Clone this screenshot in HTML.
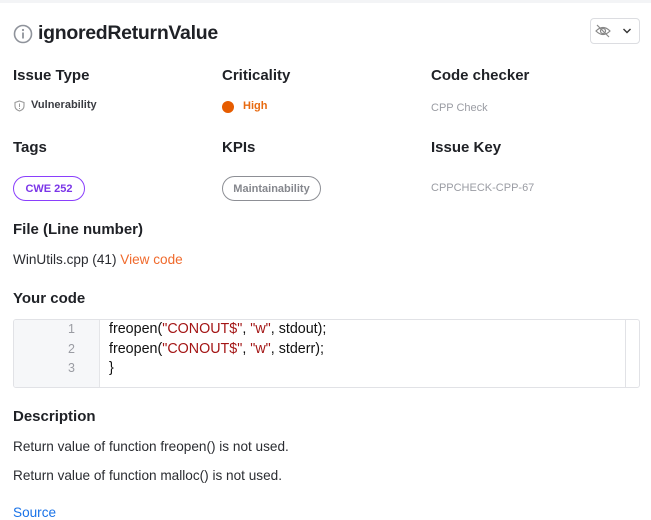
<!DOCTYPE html>
<html><head><meta charset="utf-8"><style>
*{margin:0;padding:0;box-sizing:border-box}
body{width:651px;height:517px;overflow:hidden;background:#fff;font-family:"Liberation Sans",sans-serif;color:#1f2126;position:relative}
.a{position:absolute;white-space:nowrap}
.h{font-size:15px;font-weight:bold;color:#1f2126}
.g{font-size:11px;color:#9a9ca3}
.t{font-size:13.6px;color:#2a2c31}
.pill{position:absolute;height:25px;border-radius:13px;font-size:11px;font-weight:bold;display:flex;align-items:center;justify-content:center}
</style></head><body>
<div class="a" style="left:0;top:0;width:651px;height:3px;background:#f3f4f6"></div>
<svg class="a" style="left:13px;top:24px" width="20" height="20" viewBox="0 0 20 20"><circle cx="10" cy="10" r="8.5" fill="none" stroke="#8f939b" stroke-width="1.6"/><rect x="9.1" y="8.5" width="1.8" height="6" fill="#8f939b"/><circle cx="10" cy="6" r="1.1" fill="#8f939b"/></svg>
<div class="a" style="left:38px;top:22px;font-size:19.5px;font-weight:bold;color:#1f2126;letter-spacing:-0.3px">ignoredReturnValue</div>
<div class="a" style="left:590px;top:18px;width:50px;height:26px;border:1px solid #dcdde1;border-radius:4px"></div>
<svg class="a" style="left:594px;top:23px" width="18" height="16" viewBox="0 0 18 16"><path d="M2 8 Q9 1 16 8 Q9 15 2 8Z" fill="none" stroke="#888" stroke-width="1.2"/><circle cx="9" cy="8" r="2.5" fill="none" stroke="#888" stroke-width="1.2"/><path d="M3 2 L15 14" stroke="#888" stroke-width="1.2"/></svg>
<svg class="a" style="left:622px;top:27px" width="10" height="8" viewBox="0 0 10 8"><path d="M1.5 2 L5 5.5 L8.5 2" fill="none" stroke="#333" stroke-width="1.4"/></svg>

<div class="a h" style="left:13px;top:67px">Issue Type</div>
<div class="a h" style="left:222px;top:67px">Criticality</div>
<div class="a h" style="left:431px;top:67px">Code checker</div>
<svg class="a" style="left:14px;top:100px" width="11" height="12" viewBox="0 0 11 12"><path d="M5.5 1 L10 2.5 V6 Q10 9.5 5.5 11 Q1 9.5 1 6 V2.5Z" fill="none" stroke="#999" stroke-width="1.1"/><rect x="5" y="3.5" width="1" height="3.5" fill="#999"/><rect x="5" y="8" width="1" height="1" fill="#999"/></svg>
<div class="a" style="left:31px;top:99px;font-size:11px;font-weight:bold;color:#3a3c42">Vulnerability</div>
<div class="a" style="left:222px;top:101px;width:12px;height:12px;border-radius:50%;background:#e65c00"></div>
<div class="a" style="left:243px;top:100px;font-size:11px;font-weight:bold;color:#e86a10">High</div>
<div class="a g" style="left:431px;top:102px">CPP Check</div>

<div class="a h" style="left:13px;top:139px">Tags</div>
<div class="a h" style="left:222px;top:139px">KPIs</div>
<div class="a h" style="left:431px;top:139px">Issue Key</div>
<div class="pill" style="left:13px;top:176px;width:72px;border:1px solid #8a3ffc;color:#7b36e8">CWE 252</div>
<div class="pill" style="left:222px;top:176px;width:99px;border:1px solid #8d8f95;color:#85878d">Maintainability</div>
<div class="a g" style="left:431px;top:182px">CPPCHECK-CPP-67</div>

<div class="a h" style="left:13px;top:221px">File (Line number)</div>
<div class="a t" style="left:13px;top:252px">WinUtils.cpp (41) <span style="color:#f06a2c">View code</span></div>

<div class="a h" style="left:13px;top:290px">Your code</div>
<div class="a" style="left:13px;top:319px;width:627px;height:69px;border:1px solid #e1e2e6;border-radius:3px;overflow:hidden">
 <div class="a" style="left:0;top:0;width:86px;height:69px;background:#f6f7f9;border-right:1px solid #e4e5e8"></div>
 <div class="a" style="left:611px;top:0;width:1px;height:69px;background:#e1e2e6"></div>
 <div class="a" style="left:0;top:0;width:61px;text-align:right;font-size:12.5px;line-height:19.5px;color:#9a9ca3">1<br>2<br>3</div>
 <div class="a" style="left:95px;top:0;font-size:14.3px;line-height:19.5px;color:#111">freopen(<span style="color:#a31515">"CONOUT$"</span>, <span style="color:#a31515">"w"</span>, stdout);<br>freopen(<span style="color:#a31515">"CONOUT$"</span>, <span style="color:#a31515">"w"</span>, stderr);<br>}</div>
</div>

<div class="a h" style="left:13px;top:408px">Description</div>
<div class="a t" style="left:13px;top:439px">Return value of function freopen() is not used.</div>
<div class="a t" style="left:13px;top:468px">Return value of function malloc() is not used.</div>
<div class="a t" style="left:13px;top:505px;color:#1a73e8">Source</div>
</body></html>
